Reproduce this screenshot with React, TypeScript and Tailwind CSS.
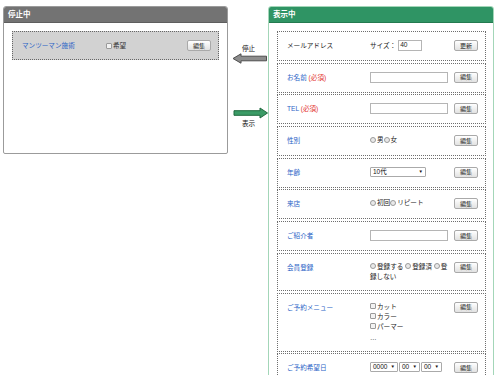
const font = "font-['Liberation_Sans','Noto_Sans_CJK_JP',sans-serif]";

function Btn({ label = "編集" }: { label?: string }) {
  return (
    <span className="inline-flex h-[11px] w-[24px] shrink-0 items-center justify-center rounded-[2px] border border-[#a9a9a9] bg-linear-to-b from-white to-[#e2e2e2] text-[6px] leading-none text-[#222]">
      {label}
    </span>
  );
}

function Radio() {
  return <span className="mr-[1px] inline-block h-[6px] w-[6px] rounded-full border border-[#9a9a9a] bg-[#e9e9e9] align-[-0.5px]" />;
}

function Check() {
  return <span className="mr-[1px] inline-block h-[6px] w-[6px] rounded-[1px] border border-[#9a9a9a] bg-[#f2f2f2] align-[-0.5px]" />;
}

function TextBox({ w = "w-[78px]" }: { w?: string }) {
  return <span className={`block h-[11px] ${w} border border-[#b5b5b5] bg-white`} />;
}

function Sel({ value, w }: { value: string; w: string }) {
  return (
    <span className={`flex h-[10px] ${w} items-center justify-between rounded-[1px] border border-[#aaa] bg-white pl-[2px] pr-[2px] text-[6.5px] leading-none text-[#111]`}>
      {value}
      <span className="text-[4.5px]">▼</span>
    </span>
  );
}

function Row({ label, children, tone = "blue", btn = "編集" }: { label: React.ReactNode; children?: React.ReactNode; tone?: "blue" | "black"; btn?: string }) {
  return (
    <div className="flex min-h-[30px] items-start border border-dotted border-[#6e6e6e] bg-white pb-[8px] pl-[9px] pr-[7px] pt-[8px]">
      <div className={`w-[83px] shrink-0 leading-[11px] ${tone === "blue" ? "text-[#2a63c6]" : "text-[#222]"}`}>{label}</div>
      <div className="w-[80px] shrink-0 leading-[10px] text-[#222]">{children}</div>
      <div className="ml-auto">
        <Btn label={btn} />
      </div>
    </div>
  );
}

const req = <span className="text-[#e3342f]"> (必須)</span>;

export default function App() {
  return (
    <div className={`${font} flex h-[375px] w-[500px] items-start overflow-hidden bg-white pl-[3px] pt-[6px] text-[6.6px]`}>
      {/* 停止中 */}
      <div className="h-[148px] w-[225px] shrink-0 rounded-t-[3px] rounded-b-[2px] border border-[#9b9b9b] bg-white">
        <div className="h-[16px] rounded-t-[2px] border-b border-[#5e5e5e] bg-[#737373] pl-[4px] text-[7.5px] font-bold leading-[15px] text-white">
          停止中
        </div>
        <div className="px-[8px] pt-[8px]">
          <div className="flex h-[29px] items-start border border-dotted border-[#666] bg-[#d2d2d2] pl-[9px] pr-[7px] pt-[8px]">
            <div className="w-[84px] leading-[11px] text-[#2a63c6]">マンツーマン施術</div>
            <div className="leading-[11px] text-[#333]">
              <Check />
              希望
            </div>
            <div className="ml-auto">
              <Btn />
            </div>
          </div>
        </div>
      </div>

      {/* arrows */}
      <div className="flex w-[40px] shrink-0 flex-col items-center pt-[38px]">
        <div className="pl-[1px] text-[6.6px] leading-[9px] text-[#111]">停止</div>
        <svg width="36" height="11" viewBox="0 0 36 11" className="ml-[3px]">
          <path d="M1 5.5 L9 0.8 L9 3.2 L34.5 3.2 L34.5 7.8 L9 7.8 L9 10.2 Z" fill="#8d8d8d" stroke="#4d4d4d" strokeWidth="1" />
        </svg>
        <svg width="36" height="12" viewBox="0 0 36 12" className="ml-[5px] mt-[43px]">
          <path d="M1 3.7 L27 3.7 L27 1 L34.5 6 L27 11 L27 8.3 L1 8.3 Z" fill="#3b9b66" stroke="#1f6a3e" strokeWidth="1" />
        </svg>
        <div className="pl-[1px] text-[6.6px] leading-[9px] text-[#111]">表示</div>
      </div>

      {/* 表示中 */}
      <div className="h-[400px] w-[226px] shrink-0 rounded-t-[3px] border border-[#a3d6b8] bg-white">
        <div className="h-[16px] rounded-t-[2px] border-b border-[#237a4f] bg-[#2f9464] pl-[4px] text-[7.5px] font-bold leading-[15px] text-white">
          表示中
        </div>
        <div className="flex flex-col gap-[1.7px] pl-[8px] pr-[7px] pt-[8px]">
          <Row label="メールアドレス" tone="black" btn="更新">
            <span className="flex items-center">
              <span className="mr-[2px]">サイズ：</span>
              <span className="flex h-[11px] w-[24px] items-center border border-[#b5b5b5] pl-[1px] leading-none">40</span>
            </span>
          </Row>
          <Row label={<>お名前{req}</>}>
            <TextBox />
          </Row>
          <Row label={<>TEL{req}</>}>
            <TextBox />
          </Row>
          <Row label="性別">
            <Radio />男<Radio />女
          </Row>
          <Row label="年齢">
            <Sel value="10代" w="w-[56px]" />
          </Row>
          <Row label="来店">
            <Radio />初回<Radio />リピート
          </Row>
          <Row label="ご紹介者">
            <TextBox />
          </Row>
          <Row label="会員登録">
            <span className="whitespace-nowrap">
              <Radio />登録する <Radio />登録済 <Radio />登
            </span>
            <br />
            録しない
          </Row>
          <Row label="ご予約メニュー">
            <div><Check />カット</div>
            <div><Check />カラー</div>
            <div><Check />パーマー</div>
            <div className="leading-[11px]">…</div>
          </Row>
          <Row label="ご予約希望日">
            <span className="flex gap-[1px]">
              <Sel value="0000" w="w-[28px]" />
              <Sel value="00" w="w-[21px]" />
              <Sel value="00" w="w-[21px]" />
            </span>
          </Row>
        </div>
      </div>
    </div>
  );
}
